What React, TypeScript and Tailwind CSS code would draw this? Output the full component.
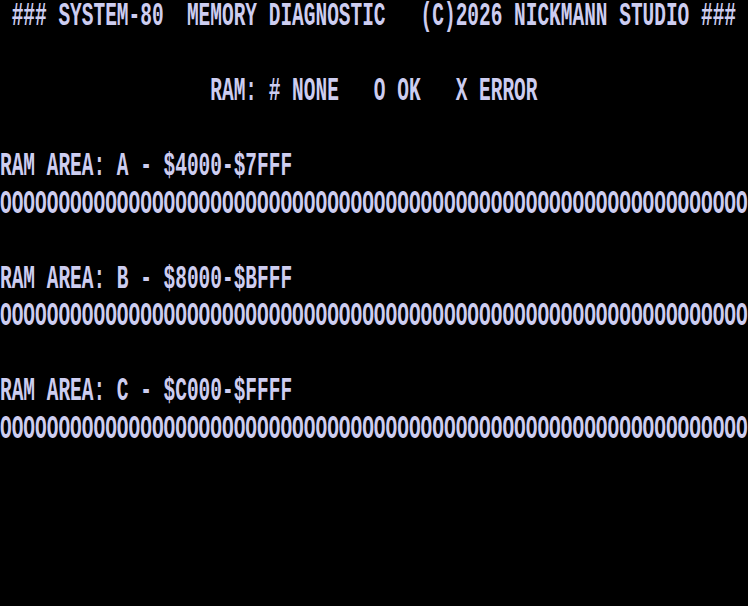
import React from 'react';

const lines: string[] = [
  ' ### SYSTEM-80  MEMORY DIAGNOSTIC   (C)2026 NICKMANN STUDIO ###',
  '',
  '                  RAM: # NONE   O OK   X ERROR',
  '',
  'RAM AREA: A - $4000-$7FFF',
  'O'.repeat(64),
  '',
  'RAM AREA: B - $8000-$BFFF',
  'O'.repeat(64),
  '',
  'RAM AREA: C - $C000-$FFFF',
  'O'.repeat(64),
  '',
  '',
  '',
  '',
];

const App: React.FC = () => {
  return (
    <div className="w-[748px] h-[606px] bg-black overflow-hidden font-['Liberation_Mono',monospace] text-[#cdcdf0]">
      {lines.map((line, i) => (
        <div key={i} className="h-[37.5px] whitespace-pre">
          <span className="inline-block origin-top scale-y-[1.7] text-[19.48px] leading-[0.9] font-bold">
            {line || ' '}
          </span>
        </div>
      ))}
    </div>
  );
};

export default App;
